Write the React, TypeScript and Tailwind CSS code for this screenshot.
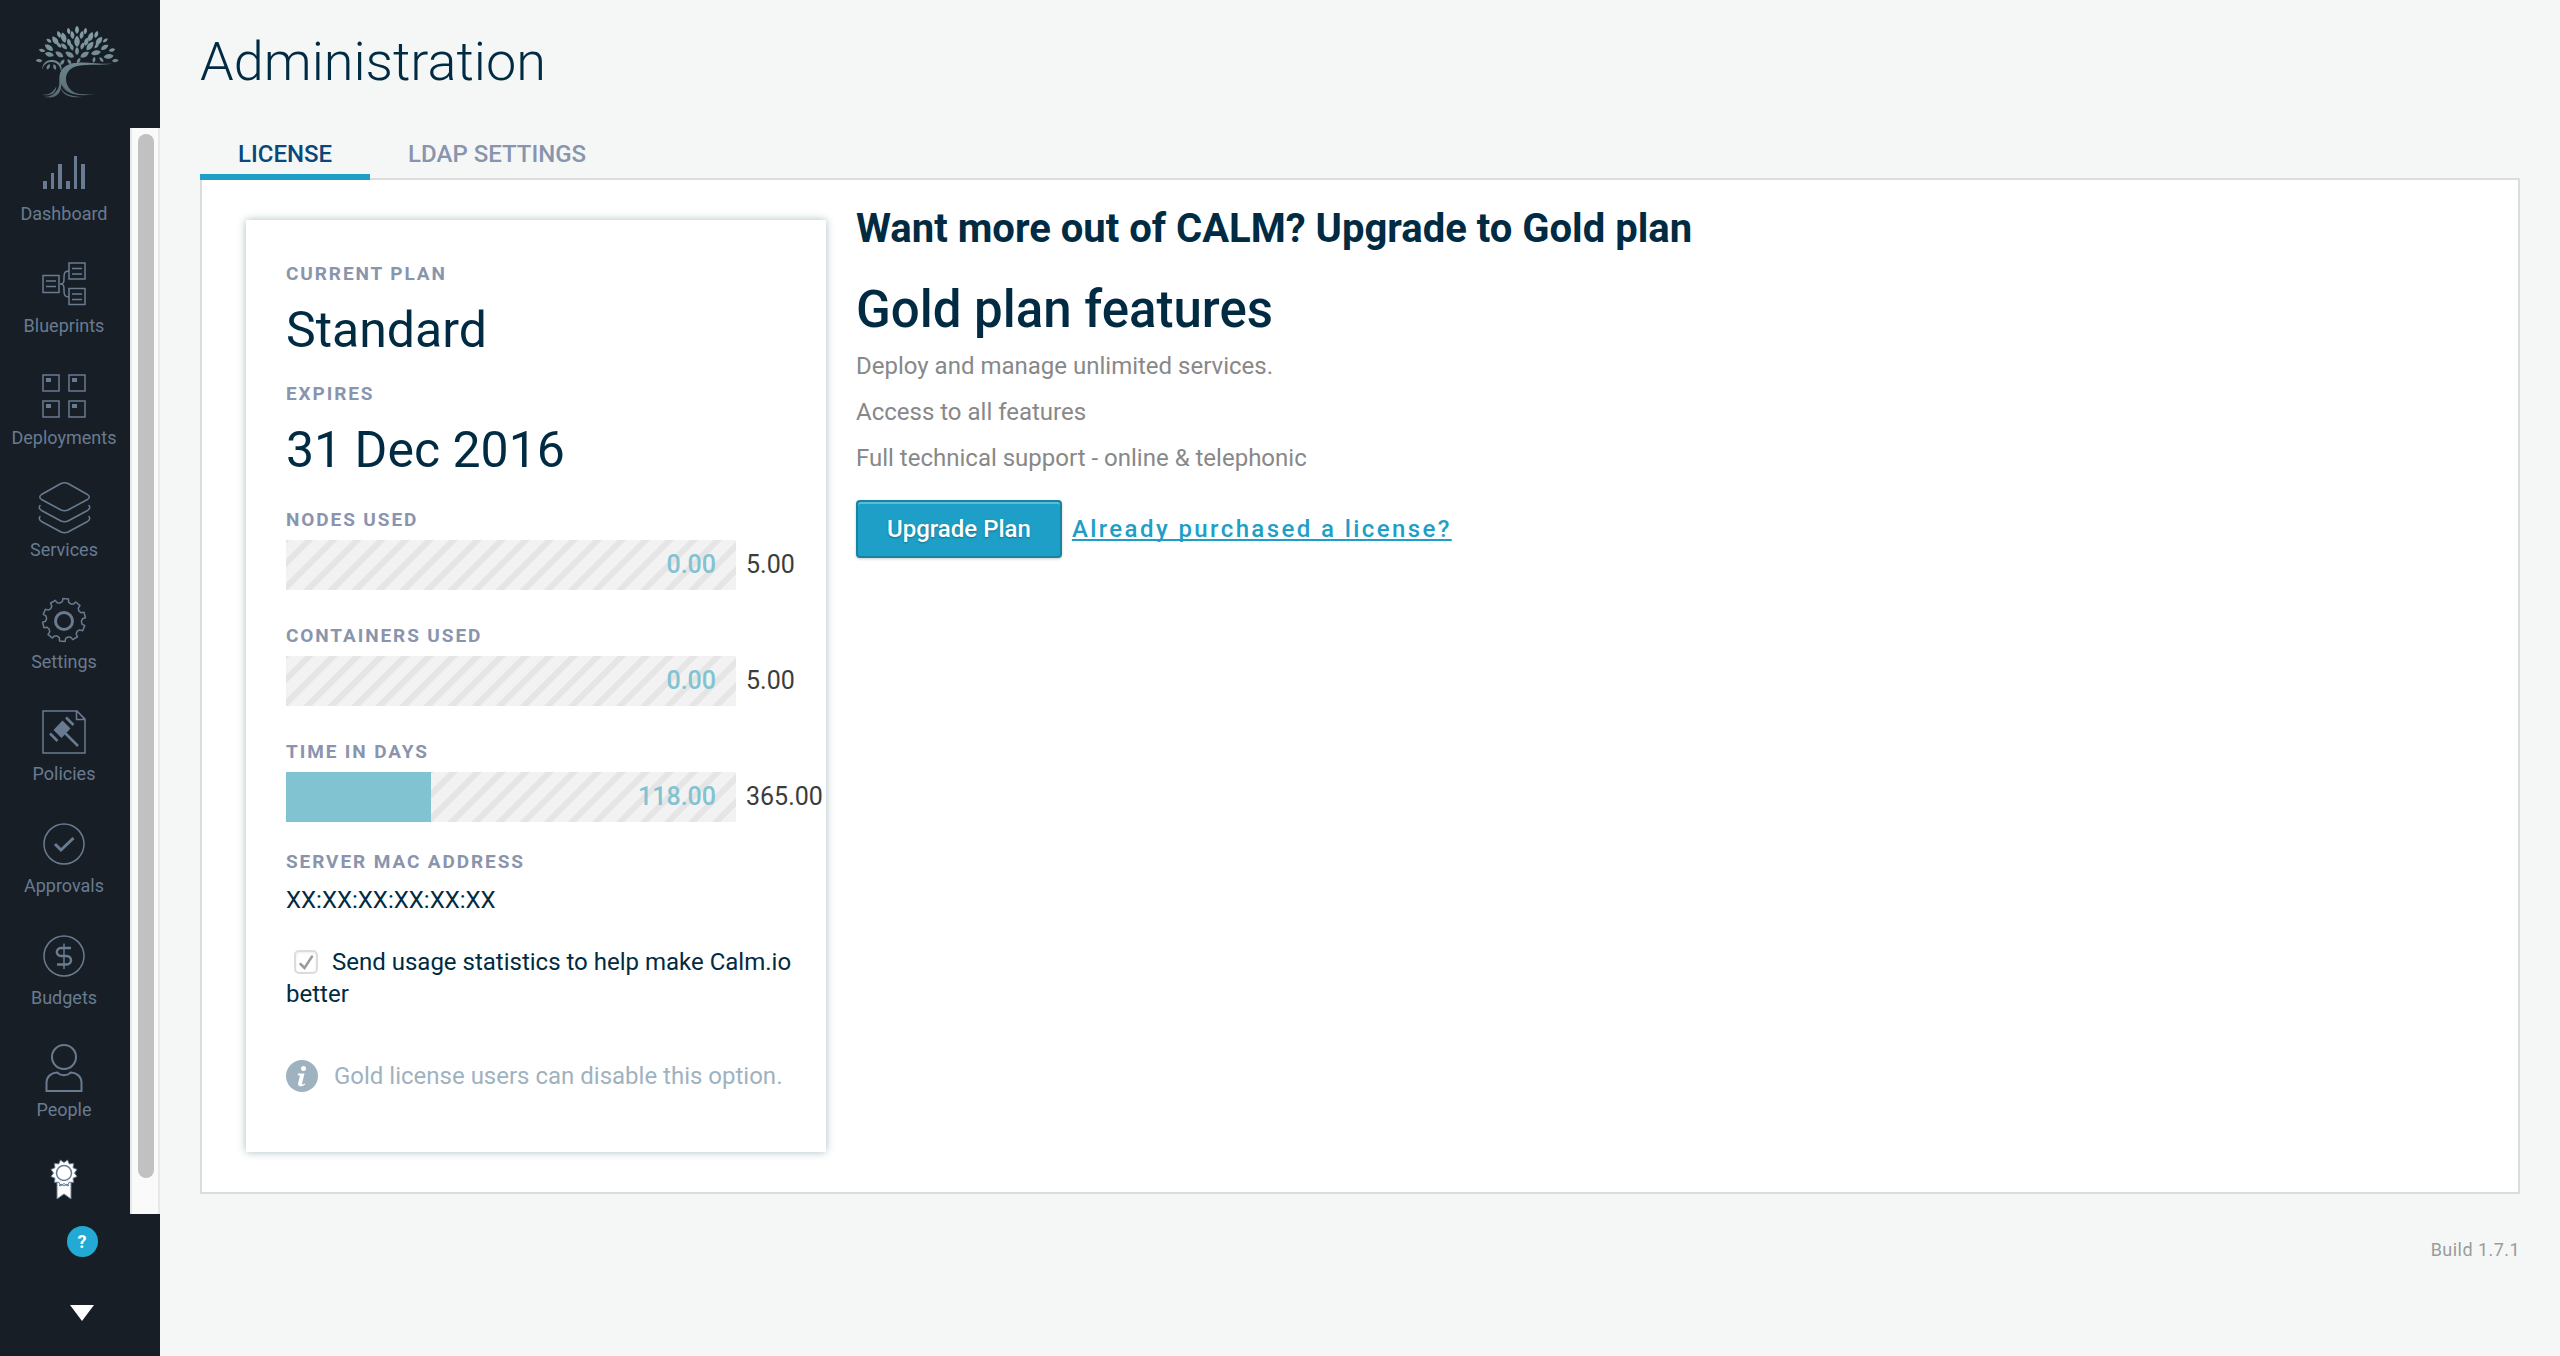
import React from "react";

/* ---------- logo ---------- */

// x, y, rotation, half length of each leaf in the tree crown
const leaves: [number, number, number, number][] = [
  [171, 44, 0, 12], [146, 48, -10, 10], [196, 48, 10, 10], [117, 58, -20, 11], [229, 58, 20, 11],
  [131, 68, -15, 16], [157, 60, -8, 12], [185, 60, 10, 12], [212, 65, 20, 15], [106, 77, -35, 15],
  [171, 79, 0, 17], [147, 82, -15, 12], [199, 80, 18, 13], [237, 78, 38, 15], [87, 77, -55, 9],
  [256, 76, 55, 9], [87, 98, -55, 15], [117, 90, -40, 10], [132, 94, -45, 12], [155, 96, -18, 11],
  [187, 93, 18, 11], [210, 93, 38, 16], [230, 93, 45, 9], [254, 97, 58, 13], [66, 106, -75, 10],
  [276, 105, 75, 10], [88, 118, -75, 14], [118, 118, -55, 14], [149, 119, -58, 15], [171, 108, 0, 12],
  [194, 119, 58, 15], [228, 113, 78, 15], [266, 124, 82, 15], [57, 137, -85, 10], [286, 137, 85, 10],
  [85, 155, 25, 9], [104, 156, -15, 9], [127, 142, 35, 10], [148, 140, -35, 9], [176, 137, 30, 9],
  [222, 134, 10, 9], [244, 134, -40, 9],
];

function TreeLogo() {
  return (
    <svg viewBox="0 0 330 285" className="h-[95px] w-[110px]" role="img" aria-label="Calm">
      <defs>
        <linearGradient id="bark" gradientUnits="userSpaceOnUse" x1="0" y1="30" x2="0" y2="250">
          <stop offset="0" stopColor="#8aa3ab" />
          <stop offset="0.5" stopColor="#6f878f" />
          <stop offset="1" stopColor="#566970" />
        </linearGradient>
      </defs>
      <g fill="url(#bark)">
        {leaves.map(([x, y, r, s], i) => {
          const a = (r * Math.PI) / 180;
          const w = s * 0.5;
          const p = (u: number, v: number) =>
            `${(x + u * Math.cos(a) - v * Math.sin(a)).toFixed(1)} ${(y + u * Math.sin(a) + v * Math.cos(a)).toFixed(1)}`;
          return (
            <path
              key={i}
              d={`M${p(0, -s)}C${p(w * 1.3, -s * 0.4)} ${p(w * 1.3, s * 0.5)} ${p(0, s)}C${p(-w * 1.3, s * 0.5)} ${p(-w * 1.3, -s * 0.4)} ${p(0, -s)}Z`}
            />
          );
        })}
        <path d="M88 248C106 238 120 222 118 196C116 164 134 146 170 143C205 140 240 148 277 146C240 151 205 147 176 152C150 157 138 172 138 192C138 216 156 234 184 240C150 238 132 224 124 208C124 230 112 248 88 248Z" />
        <path d="M66 239C86 242 100 232 109 214C108 234 94 246 66 239Z" />
        <path d="M72 246C92 246 104 238 114 222C110 240 98 250 72 246Z" />
        <path d="M126 214C140 234 176 240 226 238C180 244 140 240 126 214Z" />
        <path d="M122 218C132 238 156 244 186 246C154 250 128 242 122 218Z" />
        <path d="M66 164C68 138 88 132 102 136C120 140 128 152 124 172C120 152 112 142 96 141C82 140 72 148 66 164Z" />
      </g>
    </svg>
  );
}

/* ---------- navigation icons ---------- */

const line = { fill: "none", stroke: "currentColor", strokeWidth: 1.5 };

function gearPath() {
  const teeth = 10;
  const pts: string[] = [];
  for (let i = 0; i < teeth; i++) {
    const base = (i / teeth) * Math.PI * 2 - Math.PI / 2 + 0.08;
    const steps: [number, number][] = [[-0.3, 17.5], [-0.17, 18.5], [-0.13, 21.5], [0.13, 21.5], [0.17, 18.5], [0.3, 17.5]];
    steps.forEach(([d, r]) => pts.push(`${(30 + r * Math.cos(base + d)).toFixed(2)} ${(30 + r * Math.sin(base + d)).toFixed(2)}`));
  }
  return `M${pts.join("L")}Z`;
}

function sealPath() {
  const pts: string[] = [];
  for (let i = 0; i < 24; i++) {
    const r = i % 2 ? 10.5 : 13.5;
    const a = (i / 24) * Math.PI * 2 - Math.PI / 12 - Math.PI / 2;
    pts.push(`${(30 + r * Math.cos(a)).toFixed(2)} ${(23 + r * Math.sin(a)).toFixed(2)}`);
  }
  return `M${pts.join("L")}Z`;
}

const icons: Record<string, React.ReactNode> = {
  Dashboard: (
    <path fill="currentColor" d="M9 39h4v8H9zM17 31h3v16h-3zM24 22h4v25h-4zM32 39h4v8h-4zM40 14h3v33h-3zM47 22h4v25h-4z" />
  ),
  Blueprints: (
    <g {...line}>
      <path d="M9 21.500h16v17H9zM35 9h16v16H35zM35 34.500h16v16H35z" />
      <path d="M12 27h10M12 32.500h10M38 14.500h10M38 20h10M38 40h10M38 45.500h10" />
      <path d="M26 30c4 0 4-2 4-6s0-7 5-7M26 30c4 0 4 2 4 6s0 7 5 7" />
    </g>
  ),
  Deployments: (
    <g>
      <path {...line} d="M9 9h16v16H9zM35 9h16v16H35zM9 35h16v16H9zM35 35h16v16H35z" />
      <path fill="currentColor" d="M12 12h5v4h-5zM38 12h5v4h-5zM12 38h5v4h-5zM38 38h5v4h-5z" />
    </g>
  ),
  Services: (
    <g {...line} strokeLinecap="round" strokeLinejoin="round">
      <path d="M27 5.500Q30.500 4 34 5.500L53.500 16.500Q57 19 53.500 21.500L34 32Q30.500 33.500 27 32L7.500 21.500Q4 19 7.500 16.500Z" />
      <path d="M6 27.500Q4 30 7.500 32.500L27 43Q30.500 44.500 34 43L53.500 32.500Q57 30 55 27.500" />
      <path d="M6 38.500Q4 41 7.500 43.500L27 54Q30.500 55.500 34 54L53.500 43.500Q57 41 55 38.500" />
    </g>
  ),
  Settings: (
    <g {...line}>
      <path d={gearPath()} strokeLinejoin="round" />
      <circle cx="30" cy="31" r="8.500" strokeWidth="3" />
    </g>
  ),
  Policies: (
    <g>
      <path {...line} d="M9 9h34l8 8v34H9zM42.500 9v8.500H51M43 9l8 8.500" />
      <path fill="currentColor" d="M28.500 18.500l8 8-9 9.500-8-8z" />
      <path stroke="currentColor" strokeWidth="2.500" fill="none" d="M32 15.500l7.500 7.500M16 31.500l7.500 7.500M31 31l13 13" />
    </g>
  ),
  Approvals: (
    <g fill="none" stroke="currentColor">
      <circle cx="30" cy="30" r="20" strokeWidth="1.500" />
      <path d="M21 30l6 6 12.500-12" strokeWidth="3" />
    </g>
  ),
  Budgets: (
    <g fill="none" stroke="currentColor">
      <circle cx="30" cy="30" r="20" strokeWidth="1.500" />
      <path d="M37 22H27C21.500 22 21.500 30 27 30H32.500C38.500 30 38.500 38.500 32.500 38.500H23" strokeWidth="2.500" />
      <path d="M30 17.500v25.500" strokeWidth="1.500" />
    </g>
  ),
  People: (
    <g {...line} strokeWidth="2">
      <circle cx="30" cy="19" r="12" />
      <path d="M12.500 53V45C12.500 38 18 34.500 23.500 34.500C26 38 34 38 36.500 34.500C42 34.500 47.500 38 47.500 45V53Z" />
    </g>
  ),
};

function NavItem({ label }: { label: string }) {
  return (
    <a href="#" className="flex flex-col items-center py-[14px] text-[#697b91]">
      <svg viewBox="0 0 60 60" className="size-[60px]" aria-hidden="true">
        {icons[label]}
      </svg>
      <span className="text-lg leading-6">{label}</span>
    </a>
  );
}

function LicenseItem() {
  return (
    <a href="#" aria-label="License" className="flex flex-col items-center pt-[14px] text-white">
      <svg viewBox="0 0 60 60" className="size-[60px]" aria-hidden="true">
        <path d="M23 30h14v19l-7-5-7 5z" fill="#fff" stroke="#697b91" strokeWidth="1" />
        <path d={sealPath()} fill="#fff" stroke="#697b91" strokeWidth="1" />
        <circle cx="30" cy="23" r="7.500" fill="#fff" stroke="#697b91" strokeWidth="1.500" />
        <path d="M25 36l2-2 3 2 3-2 2 2" fill="none" stroke="#697b91" />
      </svg>
    </a>
  );
}

function Sidebar() {
  return (
    <aside className="flex h-screen w-40 shrink-0 flex-col bg-[#171e25]">
      <div className="h-32 pl-5 pt-[15px]">
        <TreeLogo />
      </div>
      <div className="flex min-h-0 flex-1">
        <nav className="min-w-0 flex-1 overflow-hidden pr-[2px]">
          {Object.keys(icons).map((label) => (
            <NavItem key={label} label={label} />
          ))}
          <LicenseItem />
        </nav>
        <div className="w-[30px] border-x-2 border-[#e8e8e8] bg-[#fafafa] px-[6px] pb-9 pt-[6px]">
          <div className="mx-auto h-full w-4 rounded-full bg-[#c1c1c1]" />
        </div>
      </div>
      <div className="flex h-[142px] flex-col items-center gap-12 pl-1 pt-3">
        <button aria-label="Help" className="flex size-[31px] items-center justify-center rounded-full bg-[#22aad4] text-lg font-bold text-white">
          ?
        </button>
        <button aria-label="Expand menu">
          <svg viewBox="0 0 24 16" className="h-4 w-6" aria-hidden="true">
            <path d="M0 0h24L12 16z" fill="#fff" />
          </svg>
        </button>
      </div>
    </aside>
  );
}

/* ---------- license card ---------- */

function Caption({ children }: { children: React.ReactNode }) {
  return <h4 className="text-[19px] leading-6 font-bold tracking-widest text-[#8994ad]">{children}</h4>;
}

function Meter({ label, used, total }: { label: string; used: number; total: number }) {
  return (
    <section>
      <Caption>{label}</Caption>
      <div className="mt-2 flex items-center gap-[10px] text-[25px]">
        <div
          role="progressbar"
          aria-label={label}
          aria-valuenow={used}
          aria-valuemax={total}
          className="relative flex h-[50px] w-[450px] shrink-0 items-center justify-end bg-[repeating-linear-gradient(135deg,#e5e5e5_0px,#e5e5e5_2px,#f2f2f2_3px,#f2f2f2_13px,#e5e5e5_14px,#e5e5e5_17px)] pr-5 text-[#82c3d1]"
        >
          <div className="absolute inset-y-0 left-0 bg-[#82c3d1]" style={{ width: `${(used / total) * 100}%` }} />
          <span className="font-medium">{used.toFixed(2)}</span>
        </div>
        <span className="whitespace-nowrap text-[#3c3c3c]">{total.toFixed(2)}</span>
      </div>
    </section>
  );
}

function PlanCard() {
  return (
    <div className="w-[580px] shrink-0 bg-white pt-[42px] pr-8 pb-[60px] pl-10 text-[#002b42] shadow-[0_0_8px_rgba(0,70,80,0.35)]">
      <Caption>CURRENT PLAN</Caption>
      <p className="mt-3 text-[50px] leading-[64px]">Standard</p>
      <div className="mt-5">
        <Caption>EXPIRES</Caption>
      </div>
      <p className="mt-3 text-[50px] leading-[64px]">31 Dec 2016</p>
      <div className="mt-[26px] flex flex-col gap-[34px]">
        <Meter label="NODES USED" used={0} total={5} />
        <Meter label="CONTAINERS USED" used={0} total={5} />
        <Meter label="TIME IN DAYS" used={118} total={365} />
      </div>
      <div className="mt-7">
        <Caption>SERVER MAC ADDRESS</Caption>
      </div>
      <p className="mt-[10px] text-2xl leading-8">XX:XX:XX:XX:XX:XX</p>
      <label className="mt-[30px] block text-2xl leading-8">
        <span className="relative ml-2 mr-[14px] inline-block size-6 align-[-4px]">
          <input
            type="checkbox"
            defaultChecked
            className="block size-6 appearance-none rounded-[5px] border-2 border-[#dcdcdc] bg-white shadow-[inset_0_1px_3px_rgba(0,0,0,0.08)]"
          />
          <svg viewBox="0 0 24 24" className="pointer-events-none absolute inset-0 size-6" aria-hidden="true">
            <path d="M6.500 14l4 4L18 6.500" fill="none" stroke="#9b9b9b" strokeWidth="2.500" strokeLinecap="round" />
          </svg>
        </span>
        Send usage statistics to help make Calm.io better
      </label>
      <p className="mt-[50px] flex items-center gap-4 text-2xl leading-8 text-[#9fb2c0]">
        <svg viewBox="0 0 32 32" className="size-8 shrink-0" aria-hidden="true">
          <circle cx="16" cy="16" r="16" fill="#9fb2c0" />
          <circle cx="17.500" cy="8.500" r="2.500" fill="#fff" />
          <path d="M12 13.500h6.500l-2.500 10q-.3 1.300 1 .8l2.200-.9-.3 1.300q-3 2-5.400 1.600-2-.4-1.400-3l1.900-7.500-2.300-.6z" fill="#fff" />
        </svg>
        <span className="whitespace-nowrap">Gold license users can disable this option.</span>
      </p>
    </div>
  );
}

function GoldPlan() {
  return (
    <div className="-mt-4 min-w-0 flex-1">
      <h2 className="text-[40px] leading-[50px] font-bold text-[#002b42]">Want more out of CALM? Upgrade to Gold plan</h2>
      <h3 className="mt-[26px] text-[51px] leading-[60px] font-medium text-[#002b42]">Gold plan features</h3>
      <ul className="mt-[10px] flex flex-col gap-[14px] text-2xl leading-8 text-[#888888]">
        <li>Deploy and manage unlimited services.</li>
        <li>Access to all features</li>
        <li>Full technical support - online &amp; telephonic</li>
      </ul>
      <div className="mt-[26px] flex items-center gap-[10px] text-2xl">
        <button className="h-[58px] rounded-[4px] border-2 border-[#16839f] bg-[#1d9fc7] px-[29px] font-medium text-white shadow-[inset_0_2px_0_#5bbbd8,0_1px_3px_rgba(0,0,0,0.2)] [text-shadow:0_1px_2px_rgba(0,0,0,0.3)]">
          Upgrade Plan
        </button>
        <a href="#" className="font-medium tracking-widest text-[#1d9fc7] underline decoration-2 underline-offset-2 [text-decoration-skip-ink:none]">
          Already purchased a license?
        </a>
      </div>
    </div>
  );
}

export default function App() {
  return (
    <div className="flex min-h-screen bg-[#f5f7f7] font-['Roboto',sans-serif]">
      <Sidebar />
      <main className="min-w-0 flex-1 px-10 pt-[30px]">
        <h1 className="text-[54px] leading-[64px] font-[350] text-[#002b42]">Administration</h1>
        <div role="tablist" className="relative mt-11 flex text-2xl leading-8 font-medium">
          <button role="tab" aria-selected="true" className="border-b-6 border-[#1d9fc7] px-[38px] pb-1 text-[#0b4779]">
            LICENSE
          </button>
          <button role="tab" aria-selected="false" className="border-b-6 border-transparent px-[38px] pb-1 text-[#8994ad]">
            LDAP SETTINGS
          </button>
        </div>
        <div role="tabpanel" className="-mt-[2px] flex items-start gap-[30px] border-2 border-[#dadddd] bg-white py-10 pl-11 pr-10">
          <PlanCard />
          <GoldPlan />
        </div>
        <p className="mt-11 text-right text-lg leading-6 tracking-wide text-[#9b9b9b]">Build 1.7.1</p>
      </main>
    </div>
  );
}
